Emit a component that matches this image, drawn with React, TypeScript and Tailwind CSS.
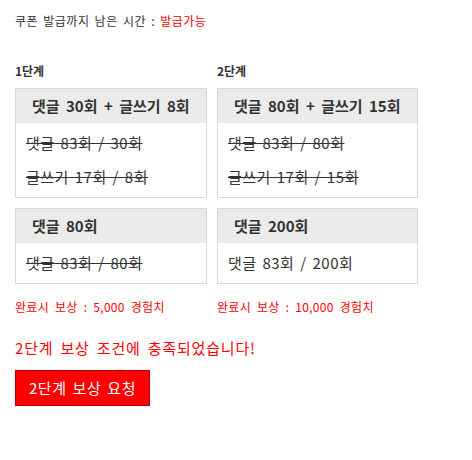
import React from "react";

const FONT = "font-['Noto_Sans_CJK_KR','Noto_Sans',sans-serif]";

interface StepBox {
  title: string;
  lines: { text: string; done: boolean }[];
}

interface Column {
  label: string;
  width: string;
  boxes: StepBox[];
  reward: string;
}

const columns: Column[] = [
  {
    label: "1단계",
    width: "w-[192px]",
    boxes: [
      {
        title: "댓글 30회 + 글쓰기 8회",
        lines: [
          { text: "댓글 83회 / 30회", done: true },
          { text: "글쓰기 17회 / 8회", done: true },
        ],
      },
      {
        title: "댓글 80회",
        lines: [{ text: "댓글 83회 / 80회", done: true }],
      },
    ],
    reward: "완료시 보상 : 5,000 경험치",
  },
  {
    label: "2단계",
    width: "w-[201px]",
    boxes: [
      {
        title: "댓글 80회 + 글쓰기 15회",
        lines: [
          { text: "댓글 83회 / 80회", done: true },
          { text: "글쓰기 17회 / 15회", done: true },
        ],
      },
      {
        title: "댓글 200회",
        lines: [{ text: "댓글 83회 / 200회", done: false }],
      },
    ],
    reward: "완료시 보상 : 10,000 경험치",
  },
];

function Box({ box }: { box: StepBox }) {
  return (
    <div className="border border-[#d6d6d6] bg-white">
      <div className="flex h-[34px] items-center bg-[#ebebeb] pl-4 text-[15px] font-bold text-[#333] [word-spacing:3px]">
        {box.title}
      </div>
      <div className="py-[3px] pl-[10px]">
        {box.lines.map((l) => (
          <div
            key={l.text}
            className={`h-[34px] leading-[34px] text-[15px] text-[#333] tracking-[0.5px] [word-spacing:2px] ${
              l.done ? "line-through decoration-[#333]" : ""
            }`}
          >
            {l.text}
          </div>
        ))}
      </div>
    </div>
  );
}

export default function App() {
  return (
    <div className={`min-h-[460px] w-[472px] bg-white px-[15px] pt-[12px] ${FONT}`}>
      {/* Coupon status */}
      <p className="text-[12px] leading-[18px] text-[#333] tracking-[0.5px] [word-spacing:2px]">
        쿠폰 발급까지 남은 시간 : <span className="text-[#ff0000]">발급가능</span>
      </p>

      {/* Steps */}
      <div className="mt-[32px] flex gap-[10px]">
        {columns.map((col) => (
          <div key={col.label} className={col.width}>
            <div className="mb-[8px] text-[12px] font-bold leading-[18px] text-[#333]">
              {col.label}
            </div>
            <div className="flex flex-col gap-[10px]">
              {col.boxes.map((b) => (
                <Box key={b.title} box={b} />
              ))}
            </div>
            <div className="mt-[14px] text-[12px] leading-[18px] text-[#ff0000] tracking-[0.3px] [word-spacing:3px]">
              {col.reward}
            </div>
          </div>
        ))}
      </div>

      {/* Result */}
      <p className="mt-[22px] text-[15px] leading-[20px] text-[#ff0000] tracking-[0.8px] [word-spacing:3px]">
        2단계 보상 조건에 충족되었습니다!
      </p>
      <button className="mt-[12px] flex h-[36px] w-[135px] items-center justify-center border border-[#b30000] bg-[#ff0000] text-[15px] text-white tracking-[0.6px] [word-spacing:2px]">
        2단계 보상 요청
      </button>
    </div>
  );
}
